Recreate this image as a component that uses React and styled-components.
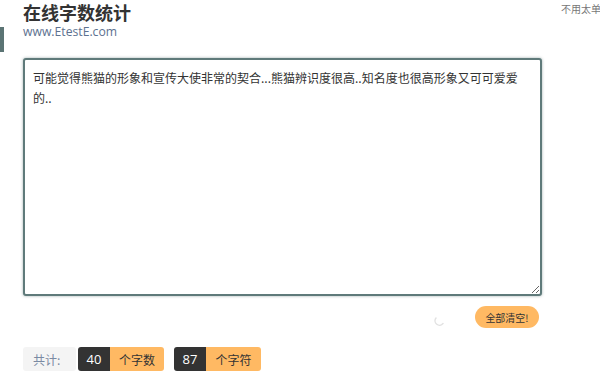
import React, { useState } from "react";
import styled, { createGlobalStyle } from "styled-components";

const Global = createGlobalStyle`
  html, body { margin: 0; padding: 0; background: #fff; }
  body { font-family: "Noto Sans CJK SC", "Noto Sans", sans-serif; color: #333; overflow: hidden; }
`;

const Page = styled.div`
  position: relative;
  width: 600px;
  height: 379px;
  overflow: hidden;
`;

const TopNote = styled.div`
  position: absolute;
  top: 1px;
  left: 561px;
  font-size: 10px;
  color: #777;
  white-space: nowrap;
`;

const Header = styled.header`
  position: relative;
  padding: 1px 0 0 23px;
  height: 58px;
  box-sizing: border-box;
`;

const SideMark = styled.div`
  position: absolute;
  left: 0;
  top: 27px;
  width: 4px;
  height: 25px;
  background: #5b7474;
`;

const Title = styled.h1`
  margin: 0;
  font-size: 18px;
  line-height: 22px;
  font-weight: 700;
  color: #333;
`;

const Site = styled.div`
  font-family: "Open Sans", "Noto Sans", sans-serif;
  font-size: 12.2px;
  line-height: 17px;
  color: #5d7190;
`;

const Main = styled.main`
  padding: 0 0 0 23px;
  width: 519px;
`;

const Area = styled.textarea`
  display: block;
  width: 519px;
  height: 238px;
  box-sizing: border-box;
  border: 2px solid #5f7a7a;
  border-radius: 3px;
  box-shadow: 0 0 3px rgba(95, 122, 122, 0.6);
  padding: 8px 8px;
  font-family: "Noto Sans CJK SC", sans-serif;
  font-size: 12px;
  line-height: 20px;
  color: #333;
  resize: both;
  outline: none;
`;

const ActionRow = styled.div`
  display: flex;
  justify-content: flex-end;
  align-items: center;
  gap: 29px;
  margin-top: 10px;
  padding-right: 3px;
`;

const Spinner = styled.svg`
  width: 12px;
  height: 12px;
  margin-top: 6px;
`;

const ClearButton = styled.button`
  height: 22px;
  width: 64px;
  border: none;
  border-radius: 11px;
  background: #ffb963;
  color: #333;
  font-family: "Noto Sans CJK SC", sans-serif;
  font-size: 10px;
  padding: 0;
  cursor: pointer;
`;

const Stats = styled.div`
  display: flex;
  align-items: center;
  margin-top: 19px;
  gap: 10px;
`;

const Total = styled.span`
  display: inline-flex;
  align-items: center;
  height: 24px;
  padding: 0 10px;
  margin-right: -8px;
  width: 53px;
  box-sizing: border-box;
  background: #f4f4f4;
  border-radius: 3px;
  color: #7a8aa3;
  font-size: 12px;
`;

const Badge = styled.span`
  display: inline-flex;
  height: 24px;
  border-radius: 3px;
  overflow: hidden;
  font-size: 12px;
`;

const Num = styled.span`
  display: inline-flex;
  align-items: center;
  justify-content: center;
  width: 32px;
  background: #333;
  color: #fff;
  font-family: "Open Sans", sans-serif;
  font-size: 13px;
`;

const Label = styled.span`
  display: inline-flex;
  align-items: center;
  justify-content: center;
  width: ${(p) => p.w}px;
  background: #ffb963;
  color: #333;
`;

const initial =
  "可能觉得熊猫的形象和宣传大使非常的契合...熊猫辨识度很高..知名度也很高形象又可可爱爱的..";

export default function App() {
  const [text, setText] = useState(initial);
  return (
    <Page>
      <Global />
      <TopNote>不用太单调</TopNote>
      <Header>
        <SideMark />
        <Title>在线字数统计</Title>
        <Site>www.EtestE.com</Site>
      </Header>
      <Main>
        <Area value={text} onChange={(e) => setText(e.target.value)} spellCheck={false} />
        <ActionRow>
          <Spinner viewBox="0 0 12 12">
            <path d="M2 4 A4 4 0 0 0 9 9.5" fill="none" stroke="#e2e2e2" strokeWidth="1.5" strokeLinecap="round" />
          </Spinner>
          <ClearButton onClick={() => setText("")}>全部清空!</ClearButton>
        </ActionRow>
        <Stats>
          <Total>共计:</Total>
          <Badge>
            <Num>40</Num>
            <Label w={54}>个字数</Label>
          </Badge>
          <Badge>
            <Num>87</Num>
            <Label w={55}>个字符</Label>
          </Badge>
        </Stats>
      </Main>
    </Page>
  );
}
